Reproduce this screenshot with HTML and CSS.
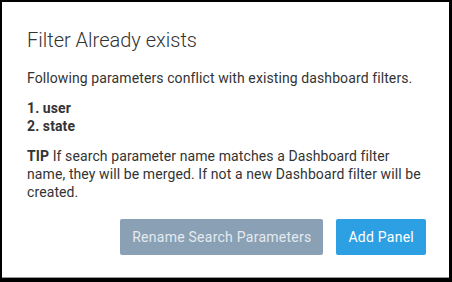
FILE: index.html
```html
<!DOCTYPE html>
<html lang="en">
<head>
    <meta charset="UTF-8">
    <title>Filter Already exists</title>
    <link rel="stylesheet" href="styles.css">
</head>
<body>
    <div class="dialog">
        <h2 class="dialog-title">Filter Already exists</h2>
        <div class="dialog-body">
            <p>Following parameters conflict with existing dashboard filters.</p>
            <ol class="conflicts">
                <li>1. user</li>
                <li>2. state</li>
            </ol>
            <p><strong>TIP</strong> If search parameter name matches a Dashboard filter name, they will be merged. If not a new Dashboard filter will be created.</p>
        </div>
        <div class="dialog-footer">
            <button class="btn btn-secondary">Rename Search Parameters</button>
            <button class="btn btn-primary">Add Panel</button>
        </div>
    </div>
</body>
</html>
```

FILE: styles.css
```css
body {
    margin: 0;
    padding: 2px;
    background-color: #000;
    font-family: Roboto, "Liberation Sans", sans-serif;
    color: #333;
    height: 282px;
    box-sizing: border-box;
}

.dialog {
    width: 447px;
    height: 276px;
    box-sizing: border-box;
    background-color: #fff;
    border-bottom: 1px solid #9a9a9a;
    padding: 26px 23px 22px 25px;
    display: flex;
    flex-direction: column;
}

.dialog-title {
    margin: 0 0 17px;
    font-size: 20px;
    font-weight: 300;
    line-height: 24px;
    color: #333;
}

.dialog-body {
    font-size: 14px;
    line-height: 18px;
    letter-spacing: 0.1px;
    padding-right: 1px;
}

.dialog-body p {
    margin: 0 0 12px;
}

.conflicts {
    list-style: none;
    margin: 0 0 12px;
    padding: 0;
    font-weight: bold;
}

.dialog-footer {
    margin-top: auto;
    display: flex;
    justify-content: flex-end;
    gap: 13px;
}

.btn {
    height: 36px;
    padding: 0 12px;
    border: none;
    border-radius: 2px;
    font-family: Roboto, "Liberation Sans", sans-serif;
    font-size: 14px;
    letter-spacing: 0.25px;
    color: #fff;
    cursor: pointer;
}

.btn-secondary {
    background-color: #8aa0b4;
    color: #e4eaf0;
}

.btn-primary {
    background-color: #2d9fe3;
}
```
